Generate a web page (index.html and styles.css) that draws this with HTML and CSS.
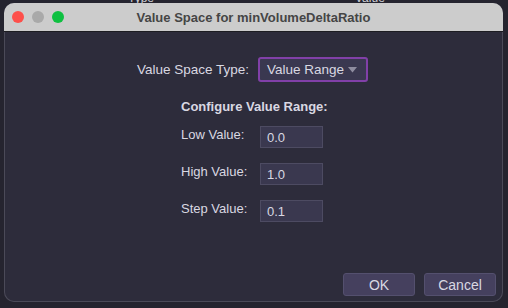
FILE: index.html
```html
<!DOCTYPE html>
<html lang="en">
<head>
  <meta charset="UTF-8">
  <title>Value Space for minVolumeDeltaRatio</title>
  <link rel="stylesheet" href="styles.css">
</head>
<body>
  <div class="backdrop">
    <div class="behind">
      <span class="behind-type">Type</span>
      <span class="behind-value">Value</span>
    </div>

    <div class="window">
      <div class="titlebar">
        <div class="lights">
          <span class="light red"></span>
          <span class="light gray"></span>
          <span class="light green"></span>
        </div>
        <div class="title">Value Space for minVolumeDeltaRatio</div>
      </div>

      <div class="content">
        <div class="type-row">
          <label class="type-label">Value Space Type:</label>
          <div class="select">
            <span>Value Range</span>
            <svg class="caret" width="9" height="6" viewBox="0 0 9 6"><path d="M0 0h9L4.5 5.5z" fill="#8f8da0"/></svg>
          </div>
        </div>

        <div class="config">
          <div class="config-title">Configure Value Range:</div>
          <div class="field">
            <span class="field-label">Low Value:</span>
            <div class="input">0.0</div>
          </div>
          <div class="field">
            <span class="field-label">High Value:</span>
            <div class="input">1.0</div>
          </div>
          <div class="field">
            <span class="field-label">Step Value:</span>
            <div class="input">0.1</div>
          </div>
        </div>

        <div class="buttons">
          <button class="btn">OK</button>
          <button class="btn">Cancel</button>
        </div>
      </div>
    </div>
  </div>
</body>
</html>
```

FILE: styles.css
```css
html, body {
  margin: 0;
  padding: 0;
  background: #25242f;
  font-family: "Liberation Sans", Arial, sans-serif;
  font-size: 13px;
  color: #d9d8e2;
}
.backdrop {
  position: relative;
  width: 508px;
  height: 308px;
  overflow: hidden;
  padding: 3px 5px 0 4px;
  box-sizing: border-box;
}
.behind {
  position: absolute;
  top: -9px;
  left: 0;
  width: 100%;
  font-size: 12px;
  color: #cfcfd6;
}
.behind-type { position: absolute; left: 128px; }
.behind-value { position: absolute; left: 355px; }

.window {
  position: relative;
  width: 499px;
  height: 299px;
  border-radius: 10px;
  background: #2d2c3b;
  box-shadow: inset 0 0 0 1px #4b4a58;
  display: flex;
  flex-direction: column;
  overflow: hidden;
}
.titlebar {
  height: 28px;
  background: #cccccc;
  border-bottom: 1px solid #1d1d22;
  display: flex;
  align-items: center;
  position: relative;
}
.lights {
  display: flex;
  gap: 8px;
  padding-left: 8px;
}
.light {
  width: 12px;
  height: 12px;
  border-radius: 50%;
}
.light.red { background: #fd4f4a; }
.light.gray { background: #a9a9a9; }
.light.green { background: #0fc041; }
.title {
  position: absolute;
  left: 0;
  right: 0;
  text-align: center;
  font-weight: bold;
  font-size: 13px;
  color: #454545;
}
.content {
  flex: 1;
  display: flex;
  flex-direction: column;
  padding-top: 25px;
}
.type-row {
  display: flex;
  align-items: center;
  justify-content: center;
  gap: 9px;
  padding-right: 2px;
}
.type-label {
  font-size: 13.5px;
}
.select {
  box-sizing: border-box;
  width: 110px;
  height: 25px;
  border: 2px solid #8140a8;
  border-radius: 3px;
  background: #3a3850;
  display: flex;
  align-items: center;
  justify-content: space-between;
  padding: 0 9px 0 7px;
  font-size: 13.5px;
}
.config {
  margin: 17px 0 0 177px;
}
.config-title {
  font-weight: bold;
  margin-bottom: 12px;
}
.field {
  display: flex;
  align-items: center;
  height: 22px;
  margin-bottom: 15px;
}
.field-label {
  width: 79px;
  margin-top: -6px;
}
.input {
  width: 55px;
  height: 20px;
  border: 1px solid #4d4b62;
  background: #3a384f;
  padding-left: 6px;
  line-height: 22px;
}
.buttons {
  margin-top: auto;
  display: flex;
  justify-content: flex-end;
  gap: 9px;
  padding: 0 7px 6px 0;
}
.btn {
  width: 72px;
  height: 23px;
  border: 1px solid #54506e;
  border-radius: 3px;
  background: #45405e;
  color: #d9d8e2;
  font-family: "Liberation Sans", Arial, sans-serif;
  font-size: 14px;
}
```
